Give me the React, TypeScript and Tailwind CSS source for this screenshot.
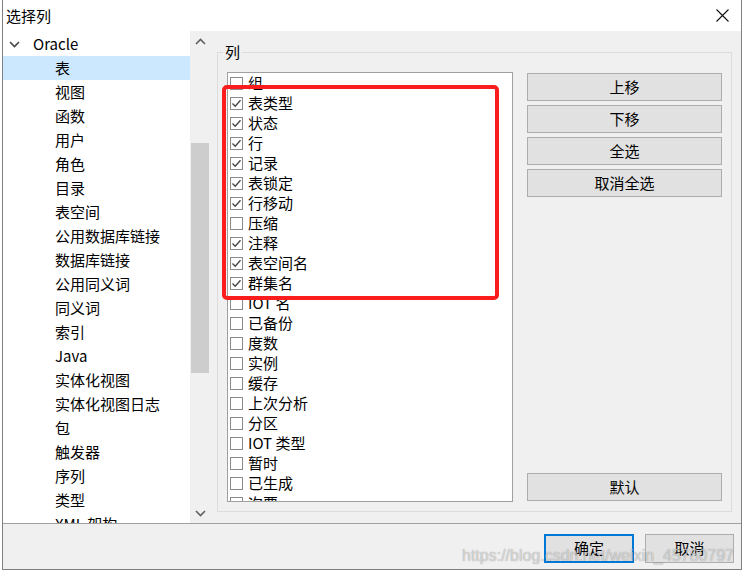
import React from "react";

const treeItems = [
  "表",
  "视图",
  "函数",
  "用户",
  "角色",
  "目录",
  "表空间",
  "公用数据库链接",
  "数据库链接",
  "公用同义词",
  "同义词",
  "索引",
  "Java",
  "实体化视图",
  "实体化视图日志",
  "包",
  "触发器",
  "序列",
  "类型",
  "XML 架构",
];

const columns: [string, boolean][] = [
  ["组", false],
  ["表类型", true],
  ["状态", true],
  ["行", true],
  ["记录", true],
  ["表锁定", true],
  ["行移动", true],
  ["压缩", false],
  ["注释", true],
  ["表空间名", true],
  ["群集名", true],
  ["IOT 名", false],
  ["已备份", false],
  ["度数", false],
  ["实例", false],
  ["缓存", false],
  ["上次分析", false],
  ["分区", false],
  ["IOT 类型", false],
  ["暂时", false],
  ["已生成", false],
  ["次要", false],
];

const Chevron = ({ up = false, className = "" }: { up?: boolean; className?: string }) => (
  <svg width="11" height="7" viewBox="0 0 11 7" className={className}>
    <path
      d={up ? "M1 6 L5.5 1.5 L10 6" : "M1 1 L5.5 5.5 L10 1"}
      fill="none"
      stroke="currentColor"
      strokeWidth="1.6"
    />
  </svg>
);

const CheckBox = ({ checked }: { checked: boolean }) => (
  <span className="w-[13px] h-[13px] border border-[#8a8a8a] bg-white flex items-center justify-center shrink-0">
    {checked && (
      <svg width="11" height="11" viewBox="0 0 11 11">
        <path d="M1.5 5.5 L4.2 8.2 L9.5 2.2" fill="none" stroke="#444" strokeWidth="1.3" />
      </svg>
    )}
  </span>
);

const WinButton = ({ label, className = "" }: { label: string; className?: string }) => (
  <div
    className={`h-[28px] bg-[#e1e1e1] border border-[#adadad] flex items-center justify-center text-[15px] text-black ${className}`}
  >
    {label}
  </div>
);

export default function App() {
  return (
    <div
      className="w-[744px] h-[577px] bg-white overflow-hidden relative text-black"
      style={{ fontFamily: '"Noto Sans CJK SC", "Noto Sans", sans-serif' }}
    >
      <div className="ml-[2px] w-[740px] h-[570px] border-l border-r border-b border-[#7f7f7f] flex flex-col">
        {/* title bar */}
        <div className="h-[31px] bg-white flex items-center justify-between pl-[3px] pr-[12px] shrink-0">
          <span className="text-[15px] leading-[20px]">选择列</span>
          <svg width="13" height="13" viewBox="0 0 13 13">
            <path d="M0.5 0.5 L12.5 12.5 M12.5 0.5 L0.5 12.5" stroke="#111" strokeWidth="1.1" />
          </svg>
        </div>

        {/* body */}
        <div className="h-[492px] flex shrink-0">
          {/* tree */}
          <div className="w-[187px] bg-white overflow-hidden pt-[1px]">
            <div className="h-[24px] flex items-center">
              <Chevron className="ml-[6px] text-[#444]" />
              <span className="ml-[13px] text-[15px] leading-[20px]">Oracle</span>
            </div>
            {treeItems.map((item, i) => (
              <div
                key={item}
                className={`h-[24px] flex items-center pl-[52px] text-[15px] leading-[20px] whitespace-nowrap ${
                  i === 0 ? "bg-[#cce8ff]" : ""
                }`}
              >
                {item}
              </div>
            ))}
          </div>

          {/* scrollbar */}
          <div className="w-[20px] bg-[#f0f0f0] flex flex-col items-center">
            <div className="h-[20px] flex items-center justify-center text-[#606060]">
              <Chevron up />
            </div>
            <div className="h-[92px]" />
            <div className="h-[230px] w-[18px] bg-[#cdcdcd]" />
            <div className="flex-1" />
            <div className="h-[20px] flex items-center justify-center text-[#606060]">
              <Chevron />
            </div>
          </div>

          {/* right panel */}
          <div className="flex-1 bg-[#f0f0f0] pt-[21px] pl-[7px] pr-[9px] pb-[11px] flex">
            <div className="flex-1 border border-[#dcdcdc] relative flex pl-[9px] pt-[19px] pb-[9px] pr-[9px] gap-[14px]">
              <span className="absolute left-[5px] top-[-11px] px-[2px] bg-[#f0f0f0] text-[15px] leading-[20px]">
                列
              </span>

              {/* list */}
              <div className="w-[286px] border border-[#a0a0a0] bg-white overflow-hidden">
                {columns.map(([name, checked]) => (
                  <div key={name} className="h-[20px] flex items-center pl-[2px] gap-[5px]">
                    <CheckBox checked={checked} />
                    <span className="text-[15px] leading-[20px] whitespace-nowrap">{name}</span>
                  </div>
                ))}
              </div>

              {/* buttons */}
              <div className="flex-1 flex flex-col justify-between pt-[1px] pb-[1px]">
                <div className="flex flex-col gap-[4px]">
                  <WinButton label="上移" />
                  <WinButton label="下移" />
                  <WinButton label="全选" />
                  <WinButton label="取消全选" />
                </div>
                <WinButton label="默认" />
              </div>

              {/* red highlight */}
              <div className="absolute left-[4px] top-[32px] w-[277px] h-[215px] border-[4px] border-[#fb1d1d] rounded-[5px] pointer-events-none" />
            </div>
          </div>
        </div>

        {/* footer */}
        <div className="flex-1 bg-[#f0f0f0] border-t border-[#a0a0a0] flex justify-end items-start pt-[10px] pr-[7px] gap-[11px]">
          <div className="w-[90px] h-[29px] bg-[#e1e1e1] border-2 border-[#0078d7] flex items-center justify-center text-[15px]">
            确定
          </div>
          <div className="w-[89px] h-[29px] bg-[#e1e1e1] border border-[#adadad] flex items-center justify-center text-[15px]">
            取消
          </div>
        </div>
      </div>

      {/* watermark */}
      <span
        className="absolute left-[462px] top-[546px] text-[16px] leading-[20px] text-white/60 [text-shadow:0_0_1px_rgba(0,0,0,0.45)] whitespace-nowrap pointer-events-none"
        style={{ fontFamily: '"Liberation Sans", Arial, sans-serif' }}
      >
        https://blog.csdn.net/weixin_45780797
      </span>
    </div>
  );
}
